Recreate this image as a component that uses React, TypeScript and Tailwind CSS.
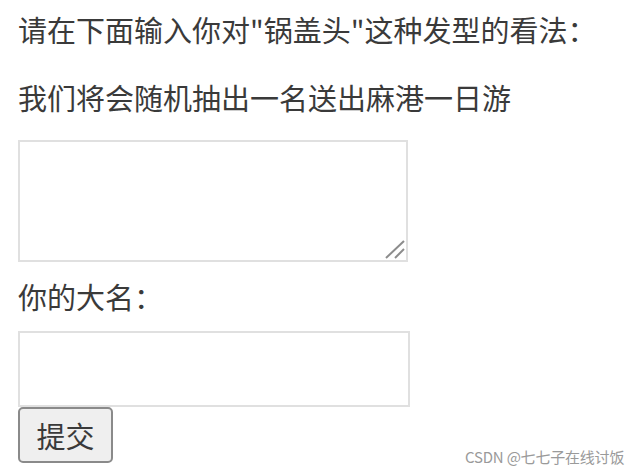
export default function App() {
  return (
    <div
      className="relative h-[473px] w-[638px] bg-white text-[#3a3a3a] overflow-hidden"
      style={{ fontFamily: '"Noto Sans CJK SC", "Microsoft YaHei", sans-serif' }}
    >
      <div className="flex flex-col items-start pl-[18px] pt-[9px] text-[29px]">
        <p className="h-[40px] leading-[40px] whitespace-nowrap">请在下面输入你对"锅盖头"这种发型的看法：</p>
        <p className="mt-[28px] h-[40px] leading-[40px] whitespace-nowrap">我们将会随机抽出一名送出麻港一日游</p>
        <div className="relative mt-[23px] h-[122px] w-[390px]">
          <textarea className="block h-full w-full resize-none border-2 border-[#e0e0e0] bg-white outline-none" />
          {/* resize grip */}
          <svg className="pointer-events-none absolute left-0 top-0" width="390" height="122">
            <line x1="368" y1="118" x2="386" y2="101" stroke="#8c8c8c" strokeWidth="2" />
            <line x1="377" y1="118" x2="386" y2="109" stroke="#8c8c8c" strokeWidth="2" />
          </svg>
        </div>
        <label className="mt-[14px] h-[40px] leading-[40px]">你的大名：</label>
        <input type="text" className="mt-[15px] h-[76px] w-[392px] border-2 border-[#e0e0e0] bg-white outline-none" />
        <button className="h-[56px] w-[95px] rounded-[5px] border-2 border-[#8a8a8a] bg-[#efefef] leading-none">
          提交
        </button>
      </div>
      <div className="absolute left-[465px] top-[447px] text-[15px] leading-[20px] text-[#9a9a9a] whitespace-nowrap tracking-[-0.2px]">
        CSDN @七七子在线讨饭
      </div>
    </div>
  );
}
